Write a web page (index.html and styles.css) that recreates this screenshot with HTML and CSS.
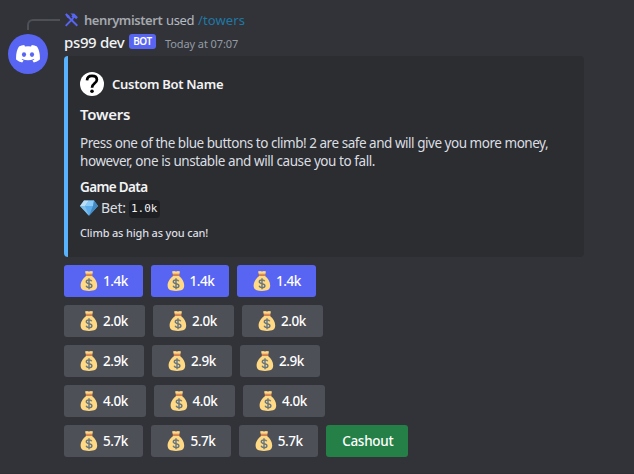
FILE: index.html
```html
<!DOCTYPE html>
<html lang="en">
<head>
<meta charset="utf-8">
<title>Towers</title>
<link rel="stylesheet" href="styles.css">
</head>
<body>
<svg class="defs" aria-hidden="true">
  <symbol id="bag" viewBox="0 0 18 20">
    <path fill="#ffd983" d="M5 .6 7 0l2 .5L11 0l2 .6-.9 3.200.2 1.500C15 7.300 17.200 11 17.200 14.600 17.200 18.500 14.800 20 9 20S.600 18.500.600 14.600C.600 11 3.200 7.300 5.900 5.300L6.100 3.800z"/>
    <path fill="#e6aa68" d="M5.600 2.500h6.800l-.3 1H5.900z"/>
    <path fill="#bf5a3e" d="M5.600 3.500h6.800v1.200H5.600z"/>
    <path fill="none" stroke="#67757f" stroke-width="1.400" d="M11.700 10.300C11.300 9.300 10.300 8.900 9 8.900c-1.600 0-2.700.8-2.700 1.900 0 2.700 5.600 1.200 5.600 3.900 0 1.200-1.200 1.900-2.800 1.900-1.600 0-2.600-.7-3-1.800M9 7.300v11"/>
  </symbol>
</svg>
<main class="message">
  <div class="reply">
    <span class="spine"></span>
    <svg class="tools" viewBox="0 0 14 14"><path fill="none" stroke="#5865f2" stroke-width="1.900" d="M1.200 12.900 8.800 5.100M4.200 4.300l8.600 8.500"/><path fill="#5865f2" d="M5.800.4h3.900l3.700 3.900-1.800 1.900-1.500-1.500-1.200.8-2-2 .9-1.200zM.6 1.500 2 .3l3.200 2.600-.2 2-2 .1z"/></svg>
    <span class="user">henrymistert</span><span class="used">used</span><span class="command">/towers</span>
  </div>
  <div class="avatar"><svg viewBox="0 0 24 18"><path fill="#fff" d="M8.200 0C6.300.3 4.600.8 3 1.500.900 4.700-.2 9 .1 14.500c1.900 1.500 3.900 2.500 6.100 3.100l1.400-2.200-2-1 .5-.4c3.800 1.700 8 1.700 11.800 0l.5.4-2 1 1.400 2.200c2.200-.6 4.200-1.600 6.100-3.100.3-5.500-.8-9.800-2.900-13C19.400.8 17.700.3 15.800 0l-.8 1.500a20 20 0 0 0-6 0z"/><ellipse cx="8" cy="9.600" rx="2.100" ry="2.300" fill="#5865f2"/><ellipse cx="16" cy="9.600" rx="2.100" ry="2.300" fill="#5865f2"/></svg></div>
  <div class="content">
    <header class="heading"><span class="name">ps99 dev</span><span class="tag">BOT</span><time class="time">Today at 07:07</time></header>
    <article class="embed">
      <div class="author"><svg class="question" viewBox="0 0 24 24"><circle cx="12" cy="12" r="12" fill="#fff"/><path fill="none" stroke="#000" stroke-width="2.700" d="M7 8.300C7.200 5.400 9.200 3.900 12 3.900c2.900 0 4.900 1.500 4.900 3.800 0 3.600-4.900 3.700-4.900 8"/><circle cx="12" cy="19.300" r="1.800"/></svg><span class="author-name">Custom Bot Name</span></div>
      <h2 class="title">Towers</h2>
      <p class="description"><span class="line-one">Press one of the blue buttons to climb! 2 are safe and will give you more money,</span><br><span class="line-two">however, one is unstable and will cause you to fall.</span></p>
      <h3 class="field">Game Data</h3>
      <div class="bet"><svg class="gem" viewBox="0 0 18 16"><path fill="#5dadec" d="M4 .5h10L18 6 9 15.700 0 6z"/><path fill="#bdddf4" d="M4 .5h5L5 6H0z"/><path fill="#8ccaf7" d="M9 .5h5L13 6H5z"/><path fill="#4289c1" d="M14 .5 18 6l-9 9.700L13 6z"/><path fill="#81bfe9" d="M0 6h5l4 9.700z"/></svg><span class="bet-label">Bet:</span><code>1.0k</code></div>
      <footer class="footer">Climb as high as you can!</footer>
    </article>
    <div class="rows">
      <div class="row r1"><button><svg><use href="#bag"/></svg><span>1.4k</span></button><button><svg><use href="#bag"/></svg><span>1.4k</span></button><button><svg><use href="#bag"/></svg><span>1.4k</span></button></div>
      <div class="row r2"><button><svg><use href="#bag"/></svg><span>2.0k</span></button><button><svg><use href="#bag"/></svg><span>2.0k</span></button><button><svg><use href="#bag"/></svg><span>2.0k</span></button></div>
      <div class="row r3"><button><svg><use href="#bag"/></svg><span>2.9k</span></button><button><svg><use href="#bag"/></svg><span>2.9k</span></button><button><svg><use href="#bag"/></svg><span>2.9k</span></button></div>
      <div class="row r4"><button><svg><use href="#bag"/></svg><span>4.0k</span></button><button><svg><use href="#bag"/></svg><span>4.0k</span></button><button><svg><use href="#bag"/></svg><span>4.0k</span></button></div>
      <div class="row r5"><button><svg><use href="#bag"/></svg><span>5.7k</span></button><button><svg><use href="#bag"/></svg><span>5.7k</span></button><button><svg><use href="#bag"/></svg><span>5.7k</span></button><button class="cashout"><span>Cashout</span></button></div>
    </div>
  </div>
</main>
</body>
</html>
```
FILE: styles.css
```css
* { box-sizing: border-box; }
body { margin: 0; background: #313338; color: #dbdee1; font-family: "Noto Sans", sans-serif; font-size: 13px; overflow: hidden; }
.defs { position: absolute; width: 0; height: 0; }
.message { height: 474px; padding: 10px 0 0 8px; display: grid; grid-template-columns: 40px 520px; grid-template-rows: 20px 1fr; column-gap: 16px; border-bottom: 1px solid #2e3035; }
.reply { grid-column: 1 / 3; display: flex; align-items: center; white-space: nowrap; color: #b5bac1; height: 19px; }
.spine { width: 33px; height: 11px; margin: 9px 4px 0 19px; border: solid #4e5058; border-width: 2px 0 0 2px; border-top-left-radius: 6px; }
.tools { width: 15px; height: 14px; margin-right: 5px; }
.user { width: 82px; font-weight: 600; color: #a5a8ad; letter-spacing: -0.42px; }
.used { width: 32px; letter-spacing: -0.35px; }
.command { color: #1f78a6; letter-spacing: 0.1px; }
.avatar { width: 40px; height: 40px; margin-top: 4px; border-radius: 50%; background: #5865f2; display: flex; align-items: center; justify-content: center; }
.avatar svg { width: 24px; height: 18px; }
.heading { display: flex; height: 26px; align-items: center; white-space: nowrap; }
.name { width: 65px; margin-top: -2px; color: #f2f3f5; font-size: 15px; font-weight: 500; letter-spacing: -0.35px; }
.tag { width: 27px; height: 15px; margin: 0 9px 3px 0; background: #5865f2; border-radius: 3px; color: #fff; text-align: center; font-size: 10px; line-height: 15px; font-weight: 600; letter-spacing: -0.4px; }
.time { color: #949ba4; font-size: 11px; padding-top: 1px; letter-spacing: -0.1px; }
.embed { height: 201px; padding: 16px 12px; background: #2b2d31; border-left: 4px solid #58b2fd; border-radius: 4px; white-space: nowrap; }
.author { height: 24px; display: flex; align-items: center; gap: 8px; }
.question { width: 24px; height: 24px; }
.author-name { font-weight: 600; color: #f2f3f5; letter-spacing: -0.28px; }
.title { margin: 7px 0 0; color: #f2f3f5; font-size: 15px; line-height: 22px; font-weight: 600; letter-spacing: -0.25px; }
.description { margin: 9px 0 0; font-size: 13.5px; line-height: 18px; letter-spacing: -0.47px; }
.line-two { letter-spacing: -0.43px; }
.field { margin: 8px 0 2px; color: #f2f3f5; font-size: 13.5px; line-height: 18px; font-weight: 600; letter-spacing: -0.65px; }
.bet { display: flex; height: 20px; align-items: center; }
.gem { width: 18px; height: 16px; margin-right: 3px; }
.bet-label { width: 28px; margin-top: -2px; font-size: 14px; letter-spacing: -0.3px; }
code { width: 31px; height: 18px; padding-left: 2px; margin-top: 1px; border-radius: 4px; background: #1e1f22; font: 11px/18px "DejaVu Sans Mono", monospace; color: #f2f3f5; }
.footer { margin-top: 7px; font-size: 11px; line-height: 16px; font-weight: 500; letter-spacing: -0.17px; }
.rows { display: grid; gap: 8px; margin-top: 8px; }
.row { display: flex; gap: 8px; }
button { width: 80px; height: 32px; padding: 0 0 0 16px; display: flex; align-items: center; gap: 5px; border: 0; border-radius: 3px; background: #4e5058; color: #fff; font: 500 13.5px/16px "Noto Sans", sans-serif; letter-spacing: -0.45px; }
button svg { flex: none; width: 18px; height: 20px; }
.r1 button { width: 78.5px; background: #5865f2; }
.r2 button { width: 81px; }
.r4 button { width: 81.500px; }
.r5 button { width: 79.400px; }
.r5 .cashout { width: 82px; background: #248046; letter-spacing: -0.300px; }
```
